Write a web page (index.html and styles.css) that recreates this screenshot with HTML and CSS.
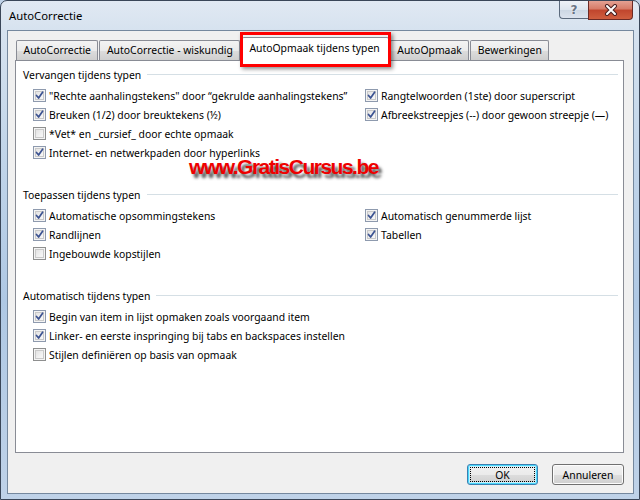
FILE: index.html
```html
<!DOCTYPE html>
<html>
<head>
<meta charset="utf-8">
<link rel="stylesheet" href="styles.css">
</head>
<body>
<div class="window">
  <div class="titlebar">
    <span class="title">AutoCorrectie</span>
    <div class="caption-btns">
      <div class="cbtn help">?</div>
      <div class="cbtn close">
        <svg width="14" height="12" viewBox="0 0 14 12"><path d="M3 2 L11 10 M11 2 L3 10" stroke="#4a2020" stroke-width="4" stroke-linecap="round"/><path d="M3 2 L11 10 M11 2 L3 10" stroke="#fff" stroke-width="2" stroke-linecap="round"/></svg>
      </div>
    </div>
  </div>
  <div class="client">
    <div class="tabs">
      <div class="tab">AutoCorrectie</div>
      <div class="tab">AutoCorrectie - wiskundig</div>
      <div class="tab active">AutoOpmaak tijdens typen</div>
      <div class="tab">AutoOpmaak</div>
      <div class="tab">Bewerkingen</div>
    </div>
    <div class="panel">
      <div class="section">
        <div class="heading"><span>Vervangen tijdens typen</span><i class="rule"></i></div>
        <div class="cols">
          <div class="col left">
            <label class="row"><span class="cb on"><svg viewBox="0 0 9 9"><path d="M1.5 4.5 L3.6 7 L7.6 1.2" /></svg></span>"Rechte aanhalingstekens" door “gekrulde aanhalingstekens”</label>
            <label class="row"><span class="cb on"><svg viewBox="0 0 9 9"><path d="M1.5 4.5 L3.6 7 L7.6 1.2" /></svg></span>Breuken (1/2) door breuktekens (½)</label>
            <label class="row"><span class="cb"></span>*Vet* en _cursief_ door echte opmaak</label>
            <label class="row"><span class="cb on"><svg viewBox="0 0 9 9"><path d="M1.5 4.5 L3.6 7 L7.6 1.2" /></svg></span>Internet- en netwerkpaden door hyperlinks</label>
          </div>
          <div class="col">
            <label class="row"><span class="cb on"><svg viewBox="0 0 9 9"><path d="M1.5 4.5 L3.6 7 L7.6 1.2" /></svg></span>Rangtelwoorden (1ste) door superscript</label>
            <label class="row"><span class="cb on"><svg viewBox="0 0 9 9"><path d="M1.5 4.5 L3.6 7 L7.6 1.2" /></svg></span>Afbreekstreepjes (--) door gewoon streepje (—)</label>
          </div>
        </div>
      </div>
      <div class="section">
        <div class="heading"><span>Toepassen tijdens typen</span><i class="rule"></i></div>
        <div class="cols">
          <div class="col left">
            <label class="row"><span class="cb on"><svg viewBox="0 0 9 9"><path d="M1.5 4.5 L3.6 7 L7.6 1.2" /></svg></span>Automatische opsommingstekens</label>
            <label class="row"><span class="cb on"><svg viewBox="0 0 9 9"><path d="M1.5 4.5 L3.6 7 L7.6 1.2" /></svg></span>Randlijnen</label>
            <label class="row"><span class="cb"></span>Ingebouwde kopstijlen</label>
          </div>
          <div class="col">
            <label class="row"><span class="cb on"><svg viewBox="0 0 9 9"><path d="M1.5 4.5 L3.6 7 L7.6 1.2" /></svg></span>Automatisch genummerde lijst</label>
            <label class="row"><span class="cb on"><svg viewBox="0 0 9 9"><path d="M1.5 4.5 L3.6 7 L7.6 1.2" /></svg></span>Tabellen</label>
          </div>
        </div>
      </div>
      <div class="section">
        <div class="heading"><span>Automatisch tijdens typen</span><i class="rule"></i></div>
        <div class="cols">
          <div class="col wide">
            <label class="row"><span class="cb on"><svg viewBox="0 0 9 9"><path d="M1.5 4.5 L3.6 7 L7.6 1.2" /></svg></span>Begin van item in lijst opmaken zoals voorgaand item</label>
            <label class="row"><span class="cb on"><svg viewBox="0 0 9 9"><path d="M1.5 4.5 L3.6 7 L7.6 1.2" /></svg></span>Linker- en eerste inspringing bij tabs en backspaces instellen</label>
            <label class="row"><span class="cb"></span>Stijlen definiëren op basis van opmaak</label>
          </div>
        </div>
      </div>
      <div class="watermark">www.GratisCursus.be</div>
    </div>
    <div class="buttons">
      <button class="btn default"><span>OK</span></button>
      <button class="btn"><span>Annuleren</span></button>
    </div>
  </div>
</div>
</body>
</html>
```
FILE: styles.css
```css
html, body {
  margin: 0;
  padding: 0;
  background: #bfd2e8;
}
.window {
  box-sizing: border-box;
  width: 640px;
  height: 500px;
  border: 1px solid #3a4658;
  border-radius: 7px 7px 0 0;
  background: linear-gradient(180deg, #e1e9f3 0px, #d6e2ef 30px, #c3d6ea 140px, #afc8e4 300px, #bfd2e8 500px);
  padding: 0 5px 5px 6px;
  display: flex;
  flex-direction: column;
  font-family: "Noto Sans", "Open Sans", sans-serif;
  font-size: 10.4px;
  color: #000;
}
.titlebar {
  height: 29px;
  display: flex;
  justify-content: space-between;
  align-items: flex-start;
}
.title {
  margin-top: 7px;
  margin-left: 2px;
  font-size: 11.3px;
  color: #000;
}
.caption-btns {
  display: flex;
  margin-right: 1px;
}
.cbtn {
  height: 18px;
  box-sizing: border-box;
  border: 1px solid #5b6a7d;
  border-top: none;
  display: flex;
  align-items: center;
  justify-content: center;
}
.help {
  width: 29px;
  border-radius: 0 0 0 4px;
  border-right: none;
  background: linear-gradient(180deg, #eef2f7 0%, #dde5ee 50%, #cbd6e3 51%, #dbe3ee 100%);
  color: #6a7484;
  font-family: "DejaVu Sans", sans-serif;
  font-weight: bold;
  font-size: 12px;
  text-shadow: 0 0 2px #fff;
}
.close {
  width: 45px;
  height: 19px;
  border-radius: 0 0 4px 0;
  border-color: #6b2a25;
  background: linear-gradient(180deg, #e4a193 0%, #d67a66 45%, #c0452d 50%, #cf5e3f 100%);
}
.client {
  flex: 1;
  background: #f0f0f0;
  border: 1px solid #75889e;
  padding: 0 9px 0 7px;
  display: flex;
  flex-direction: column;
}
.tabs {
  display: flex;
  align-items: flex-end;
  padding-left: 1px;
  height: 29px;
  position: relative;
  z-index: 2;
}
.tab {
  box-sizing: border-box;
  height: 20px;
  border: 1px solid #898c95;
  border-bottom: none;
  border-radius: 2px 2px 0 0;
  padding: 0 6.5px;
  line-height: 19px;
  margin-right: 1px;
  background: linear-gradient(180deg, #f3f3f3 0%, #ebebeb 50%, #dddddd 51%, #cfcfcf 100%);
  white-space: nowrap;
}
.tab.active {
  height: 24px;
  margin: 0 1px -1px 1px;
  padding: 0 8px 0 6px;
  line-height: 21px;
  background: #fff;
  position: relative;
}
.tab.active::after {
  content: "";
  position: absolute;
  left: -3px;
  right: -3px;
  top: -6px;
  bottom: -6px;
  border: 3px solid #ff0000;
  box-shadow: 2px 2px 4px rgba(0,0,0,0.45);
}
.panel {
  position: relative;
  box-sizing: border-box;
  height: 393px;
  background: #fff;
  border: 1px solid #898c95;
  padding: 6px 5px 0 7px;
}
.section {
  margin-bottom: 25px;
}
.heading {
  display: flex;
  align-items: center;
  height: 16px;
  line-height: 16px;
  margin-bottom: 3px;
}
.rule {
  flex: 1;
  height: 1px;
  background: #d5dfe5;
  margin-left: 6px;
  margin-top: -1px;
}
.cols {
  display: flex;
  padding-left: 10px;
}
.col.left {
  width: 332px;
}
.row {
  display: flex;
  align-items: center;
  height: 19px;
  white-space: nowrap;
}
.cb {
  box-sizing: border-box;
  width: 13px;
  height: 13px;
  border: 1px solid #8e8f8f;
  background: linear-gradient(135deg, #dcdcdc 0%, #f2f2f2 60%, #fbfbfb 100%);
  box-shadow: inset 0 0 0 1px #f4f4f4, inset 0 0 0 2px #c9c9c9;
  margin-right: 3px;
  display: flex;
  align-items: center;
  justify-content: center;
}
.cb.on {
  border-color: #8e9aae;
}
.cb svg {
  width: 9px;
  height: 9px;
}
.cb path {
  fill: none;
  stroke: #3b5291;
  stroke-width: 1.7;
  stroke-linecap: round;
  stroke-linejoin: round;
}
.watermark {
  position: absolute;
  left: 173px;
  top: 94px;
  font-family: "Liberation Sans", Arial, sans-serif;
  font-weight: bold;
  font-size: 21px;
  letter-spacing: -1.5px;
  color: #ee0000;
  text-shadow: 3px 4px 3px rgba(20,20,20,0.75);
  white-space: nowrap;
}
.buttons {
  display: flex;
  justify-content: flex-end;
  gap: 14px;
  margin-top: 11px;
}
.btn {
  box-sizing: border-box;
  width: 71px;
  height: 21px;
  border: 1px solid #707070;
  border-radius: 3px;
  background: linear-gradient(180deg, #f2f2f2 0%, #ebebeb 50%, #dddddd 51%, #cfcfcf 100%);
  box-shadow: inset 0 0 0 1px #fcfcfc;
  font-family: "Noto Sans", "Open Sans", sans-serif;
  font-size: 10.4px;
  color: #000;
  padding: 2px;
  display: flex;
  align-items: stretch;
}
.btn + .btn {
  width: 72px;
}
.btn span {
  flex: 1;
  display: flex;
  align-items: center;
  justify-content: center;
  border: 1px dotted transparent;
}
.btn.default {
  border-color: #3c7fb1;
  box-shadow: inset 0 0 0 1px #48d8fb, inset 0 0 0 2px #c9eefb;
}
.btn.default span {
  border-color: #000;
}
```
